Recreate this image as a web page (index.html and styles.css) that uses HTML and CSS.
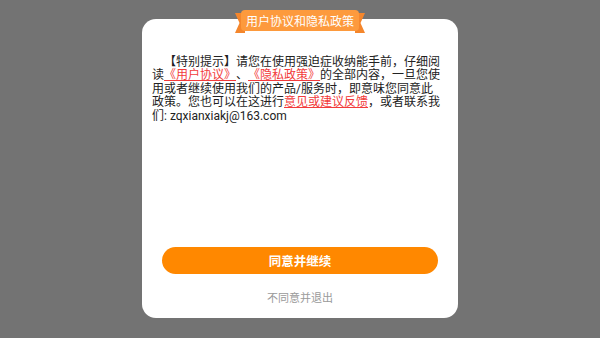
FILE: index.html
```html
<!DOCTYPE html>
<html lang="zh-CN">
<head>
<meta charset="utf-8">
<link rel="stylesheet" href="styles.css">
</head>
<body>
<div class="card">
  <div class="ribbon">
    <svg class="ribbon-bg" width="130" height="23" viewBox="0 0 130 23">
      <polygon points="0,3 10,3 10,23 0,23 4.5,13" fill="#f4862c"/>
      <polygon points="120,3 130,3 125.5,13 130,23 120,23" fill="#f4862c"/>
      <rect x="6" y="0" width="118" height="21" rx="4" fill="#fd9a3d"/>
    </svg>
    <span class="ribbon-text">用户协议和隐私政策</span>
  </div>
  <p class="notice">【特别提示】请您在使用强迫症收纳能手前，仔细阅读<a class="link">《用户协议》</a>、<a class="link">《隐私政策》</a>的全部内容，一旦您使用或者继续使用我们的产品/服务时，即意味您同意此政策。您也可以在这进行<a class="link">意见或建议反馈</a>，或者联系我们: zqxianxiakj@163.com</p>
  <button class="agree">同意并继续</button>
  <div class="exit">不同意并退出</div>
</div>
</body>
</html>
```
FILE: styles.css
```css
html, body {
  margin: 0;
  padding: 0;
}
body {
  width: 600px;
  height: 338px;
  background: #737373;
  display: flex;
  flex-direction: column;
  align-items: center;
  padding-top: 19px;
  box-sizing: border-box;
  font-family: Roboto, "Noto Sans CJK SC", sans-serif;
  text-spacing-trim: space-all;
  overflow: hidden;
}
.card {
  position: relative;
  width: 316px;
  height: 299px;
  background: #fff;
  border-radius: 14px;
  box-sizing: border-box;
  padding: 37px 0 14px 0;
  display: flex;
  flex-direction: column;
  align-items: center;
}
.ribbon {
  position: absolute;
  top: -9px;
  left: 93px;
  width: 130px;
  height: 23px;
}
.ribbon-bg {
  position: absolute;
  left: 0;
  top: 0;
}
.ribbon-text {
  position: relative;
  display: block;
  text-align: center;
  line-height: 21px;
  font-size: 12px;
  color: #fff;
  font-family: "Noto Sans CJK SC", sans-serif;
}
.notice {
  margin: 0;
  width: 290px;
  align-self: flex-start;
  margin-left: 10px;
  font-size: 12px;
  line-height: 13.4px;
  color: #222;
  text-indent: 12px;
  text-spacing-trim: space-all;
}
.link {
  color: #f23b3b;
  text-decoration: underline;
  text-decoration-color: #f23b3b;
  text-underline-offset: 1px;
}
.agree {
  margin-top: auto;
  width: 276px;
  height: 27px;
  border: none;
  border-radius: 14px;
  background: #ff8800;
  color: #fff;
  font-family: "Noto Sans CJK SC", sans-serif;
  font-size: 12.5px;
  font-weight: bold;
  padding: 0;
}
.exit {
  margin-top: 16px;
  font-size: 11px;
  line-height: 14px;
  color: #9a9a9a;
  font-family: "Noto Sans CJK SC", sans-serif;
}
```
